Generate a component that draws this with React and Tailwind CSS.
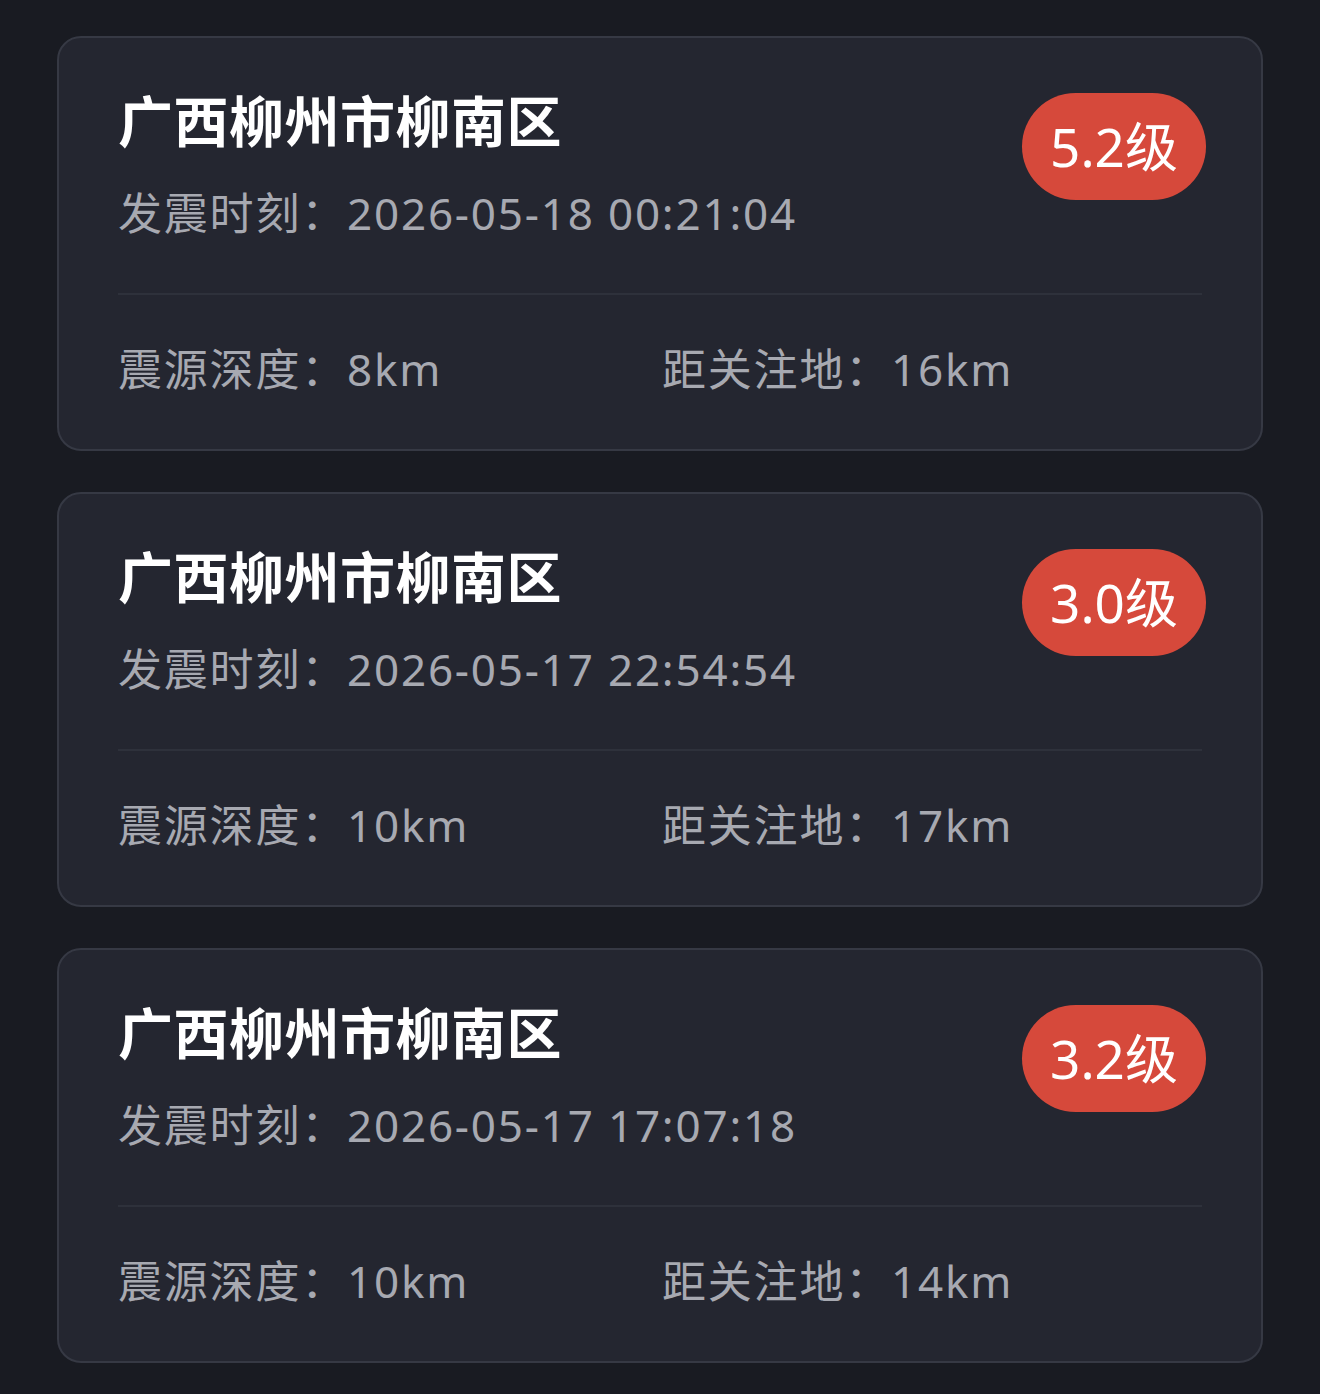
const quakes = [
  { place: '广西柳州市柳南区', time: '2026-05-18 00:21:04', level: '5.2', depth: '8km', dist: '16km' },
  { place: '广西柳州市柳南区', time: '2026-05-17 22:54:54', level: '3.0', depth: '10km', dist: '17km' },
  { place: '广西柳州市柳南区', time: '2026-05-17 17:07:18', level: '3.2', depth: '10km', dist: '14km' },
];

const FONT = { fontFamily: "'Noto Sans', 'Noto Sans CJK SC', sans-serif" };

function QuakeCard({ q }) {
  return (
    <div className="rounded-[24px] border-2 border-[#363944] bg-[#242630] pl-[59px] pr-[55px] pt-[50px] pb-[53px]">
      <div className="flex items-start justify-between">
        <div>
          <div className="text-[55px] leading-[66px] font-bold text-white tracking-[0.5px]">{q.place}</div>
          <div className="mt-[32px] text-[44px] leading-[54px] tracking-[1.8px] text-[#a7a9b1]">发震时刻：{q.time}</div>
        </div>
        <div className="mt-[5px] flex h-[107px] w-[184px] items-center justify-center rounded-full bg-[#d6493b] text-[53px] text-white">
          {q.level}级
        </div>
      </div>
      <div className="mt-[53px] mr-[4px] h-[2px] bg-[#2e313b]" />
      <div className="mt-[47px] grid grid-cols-[544px_1fr] text-[44px] leading-[54px] tracking-[1.8px] text-[#a7a9b1]">
        <div>震源深度：{q.depth}</div>
        <div>距关注地：{q.dist}</div>
      </div>
    </div>
  );
}

export default function App() {
  return (
    <div className="min-h-[1394px] bg-[#191b22] px-[57px] pt-[36px]" style={FONT}>
      <div className="flex flex-col gap-[41px]">
        {quakes.map((q, i) => <QuakeCard key={i} q={q} />)}
      </div>
    </div>
  );
}
